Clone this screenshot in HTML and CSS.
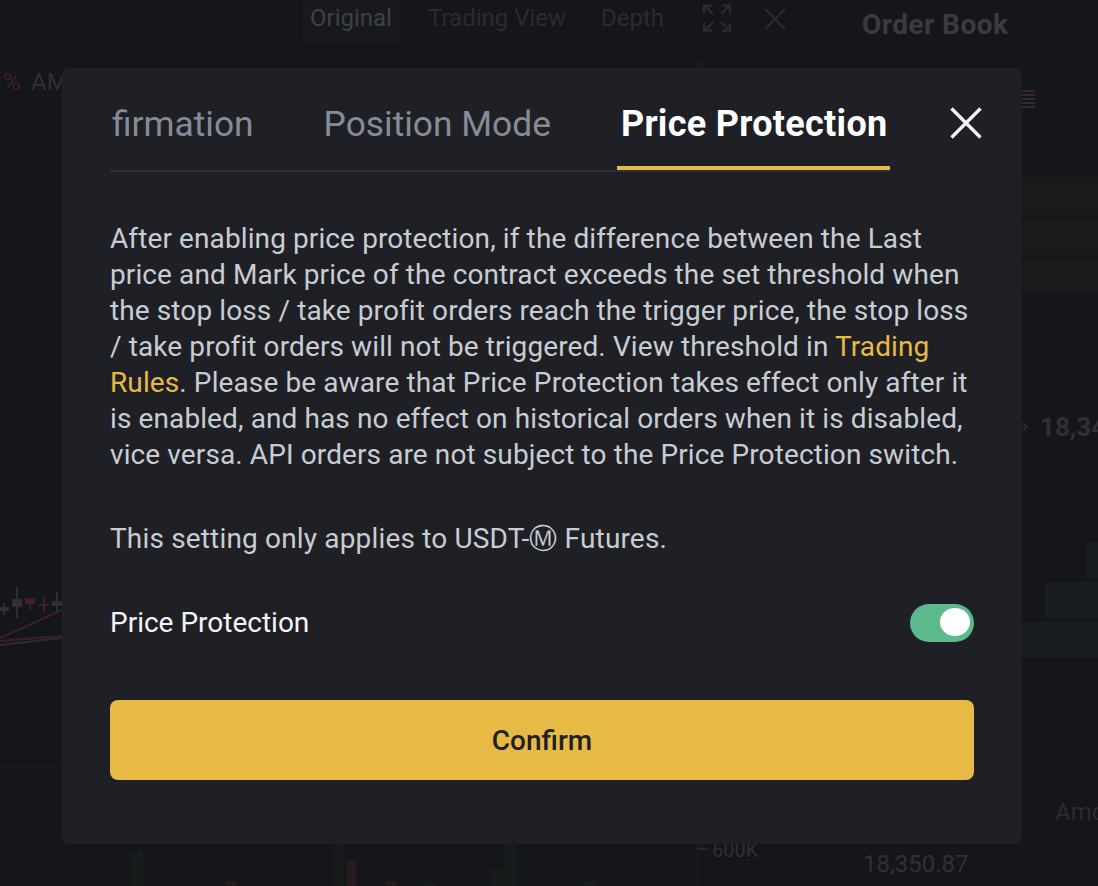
FILE: index.html
```html
<!DOCTYPE html>
<html lang="en">
<head>
<meta charset="utf-8">
<title>Price Protection</title>
<link rel="stylesheet" href="styles.css">
</head>
<body>
<div class="stage">
  <div class="bg-tab-box"></div>
  <span class="bg bg-original">Original</span>
  <span class="bg bg-trading">Trading View</span>
  <span class="bg bg-depth">Depth</span>
  <svg class="bg-expand" viewBox="0 0 28 28" fill="none" stroke="#2a2c32" stroke-width="2.4">
    <path d="M1 9V1.5H9M2 2l8 8M27 9V1.5H19M26 2l-8 8M1 19v7.5H9M2 26l8-8M27 19v7.5H19M26 26l-8-8"/>
  </svg>
  <svg class="bg-close" viewBox="0 0 22 22" fill="none" stroke="#2a2c32" stroke-width="2"><path d="M1 1l20 20M21 1L1 21"/></svg>
  <span class="bg bg-orderbook">Order Book</span>
  <span class="bg bg-percent">%</span>
  <span class="bg bg-am">AM</span>
  <svg class="bg-menu" viewBox="0 0 13 18" fill="none" stroke-width="2"><path stroke="#421d2e" d="M0 1h13"/><path stroke="#2c2e33" d="M0 5h13M0 9h13M0 13h13M0 17h13"/></svg>
  <div class="ask ask-1"></div>
  <div class="ask ask-2"></div>
  <div class="ask ask-3"></div>
  <svg class="bg-chevron" viewBox="0 0 6 10" fill="none" stroke="#2e3036" stroke-width="1.6"><path d="M1 1l4 4-4 4"/></svg>
  <span class="bg bg-mid">18,34</span>
  <div class="bid bid-1"></div>
  <div class="bid bid-2"></div>
  <div class="bid bid-3"></div>
  <span class="bg bg-amount">Amo</span>
  <span class="bg bg-price">18,350.87</span>
  <span class="bg bg-axis">600K</span>
  <svg class="bg-chart" viewBox="0 0 720 886" fill="none">
    <path stroke="#1e1f23" stroke-width="1" d="M0 766.5H62M697.5 60V68M697.5 844V886"/>
    <path stroke="#2e3035" stroke-width="1.5" d="M697 849H707"/>
    <path stroke="#2e3035" stroke-width="2" d="M4 603V615M17 587V618M57 592V612"/>
    <path stroke="#421d2e" stroke-width="2" d="M30 598V610M44 597V612M39 605H49"/>
    <path fill="#2e3035" d="M0 607H9V611H0ZM12 599H22V607H12ZM52 601H62V606H52Z"/>
    <path fill="#421d2e" d="M25 598H35V604H25Z"/>
    <path stroke="#421d2e" stroke-width="2" d="M0 638L62 610M0 641L62 636"/>
    <path stroke="#2c2e33" stroke-width="2" d="M0 645L62 638"/>
    <path fill="#161b1c" d="M132 852H143V886H132ZM333 844H343V886H333ZM425 882H436V886H425ZM491 869H503V886H491ZM505 844H516V886H505ZM585 881H596V886H585Z"/>
    <path fill="#241a20" d="M346 860H356V886H346ZM225 881H236V886H225ZM385 881H396V886H385Z"/>
  </svg>

  <section class="modal">
    <header class="modal-head">
      <nav class="tabs">
        <span class="tab">Order Confirmation</span>
        <span class="tab">Position Mode</span>
        <span class="tab tab-active">Price Protection</span>
      </nav>
      <svg class="close" viewBox="0 0 32 32" fill="none" stroke="#f0f1f2" stroke-width="3.4"><path d="M1.5 1.5l29 29M30.5 1.5l-29 29"/></svg>
    </header>
    <p class="text">After enabling price protection, if the difference between the Last price and Mark price of the contract exceeds the set threshold when the stop loss / take profit orders reach the trigger price, the stop loss / take profit orders will not be triggered. View threshold in <a class="link">Trading Rules</a>. Please be aware that Price Protection takes effect only after it is enabled, and has no effect on historical orders when it is disabled, vice versa. API orders are not subject to the Price Protection switch.</p>
    <p class="text note">This setting only applies to USDT-Ⓜ Futures.</p>
    <div class="row">
      <span class="row-label">Price Protection</span>
      <span class="toggle"><span class="thumb"></span></span>
    </div>
    <button class="confirm">Confirm</button>
  </section>
</div>
</body>
</html>
```
FILE: styles.css
```css
* { box-sizing: border-box; }
html, body { margin: 0; height: 100%; background: #15161a; }
body { overflow: hidden; font-family: Roboto, "Liberation Sans", sans-serif; }
.stage { position: relative; width: 1098px; height: 886px; overflow: hidden; background: #15161a; }

.bg { position: absolute; white-space: nowrap; font-size: 24px; line-height: 30px; color: #2a2c32; }
.bg-tab-box { position: absolute; left: 303px; top: 0; width: 97px; height: 43px; background: #18191d; }
.bg-original { left: 310px; top: 3px; color: #3e4148; }
.bg-trading { left: 428px; top: 3px; }
.bg-depth { left: 601px; top: 3px; }
.bg-expand { position: absolute; left: 703px; top: 4px; width: 28px; height: 28px; }
.bg-close { position: absolute; left: 764px; top: 8px; width: 22px; height: 22px; }
.bg-orderbook { left: 862px; top: 10px; font-size: 28px; letter-spacing: 0.45px; font-weight: 700; color: #393b41; }
.bg-percent { left: 3px; top: 67px; color: #421d2e; }
.bg-am { left: 31px; top: 67px; color: #2e2f34; }
.bg-menu { position: absolute; left: 1022px; top: 90px; width: 13px; height: 18px; }
.ask, .bid { position: absolute; right: 0; }
.ask { left: 1022px; background: #1c191c; }
.ask-1 { top: 177px; height: 38px; }
.ask-2 { top: 218px; height: 37px; }
.ask-3 { top: 258px; height: 35px; }
.bg-chevron { position: absolute; left: 1022px; top: 422px; width: 6px; height: 10px; }
.bg-mid { left: 1040px; top: 412px; font-size: 26px; font-weight: 700; color: #2e3036; }
.bid { background: #191d1f; }
.bid-1 { left: 1087px; top: 542px; height: 36px; }
.bid-2 { left: 1045px; top: 582px; height: 36px; }
.bid-3 { left: 1022px; top: 622px; height: 36px; }
.bg-amount { left: 1055px; top: 797px; }
.bg-price { left: 863px; top: 849px; color: #2f3136; }
.bg-axis { left: 712px; top: 835px; font-size: 20px; color: #2e3035; }
.bg-chart { position: absolute; left: 0; top: 0; width: 720px; height: 886px; }

.modal {
  position: absolute; left: 62px; top: 68px; width: 960px; height: 776px;
  padding: 0 48px 64px;
  background: #1f2026; border-radius: 8px;
  display: flex; flex-direction: column;
}
.modal-head { display: flex; align-items: flex-start; }
.tabs {
  flex: none; width: 780px; height: 104px;
  display: flex; justify-content: flex-end; gap: 62px;
  overflow: hidden;
  box-shadow: inset 0 -2px 0 #2f3138;
  padding-bottom: 2px;
}
.tab {
  flex: none; padding: 30px 4px 0;
  font-size: 35.35px; line-height: 52px; color: #858c97; white-space: nowrap;
}
.tab-active { padding: 30px 2.5px 0 4px; font-size: 36px; letter-spacing: 0.3px; color: #fff; font-weight: 700; border-bottom: 4px solid #e6ba44; }
.close { flex: none; width: 32px; height: 32px; margin: 39px 0 0 60px; }

.text { margin: 49px 0 -1px; font-size: 28px; letter-spacing: 0.105px; line-height: 36px; color: #c8ccd3; }
.note { letter-spacing: 0.165px; }
.link { color: #e6ba44; }
.row { margin-top: 48px; height: 38px; display: flex; align-items: center; justify-content: space-between; }
.row-label { font-size: 28px; line-height: 36px; color: #f4f5f6; }
.toggle { width: 64px; height: 38px; padding: 4px; background: #5bb98b; border-radius: 19px; display: flex; justify-content: flex-end; }
.thumb { width: 30px; height: 28px; margin: 0 0 0 auto; border-radius: 50%; background: #fff; }
.confirm {
  margin-top: 58px; height: 80px; border: 0; border-radius: 8px;
  background: #e6ba44; color: #1f2026;
  font-family: inherit; font-size: 28px; font-weight: 500;
}
```
